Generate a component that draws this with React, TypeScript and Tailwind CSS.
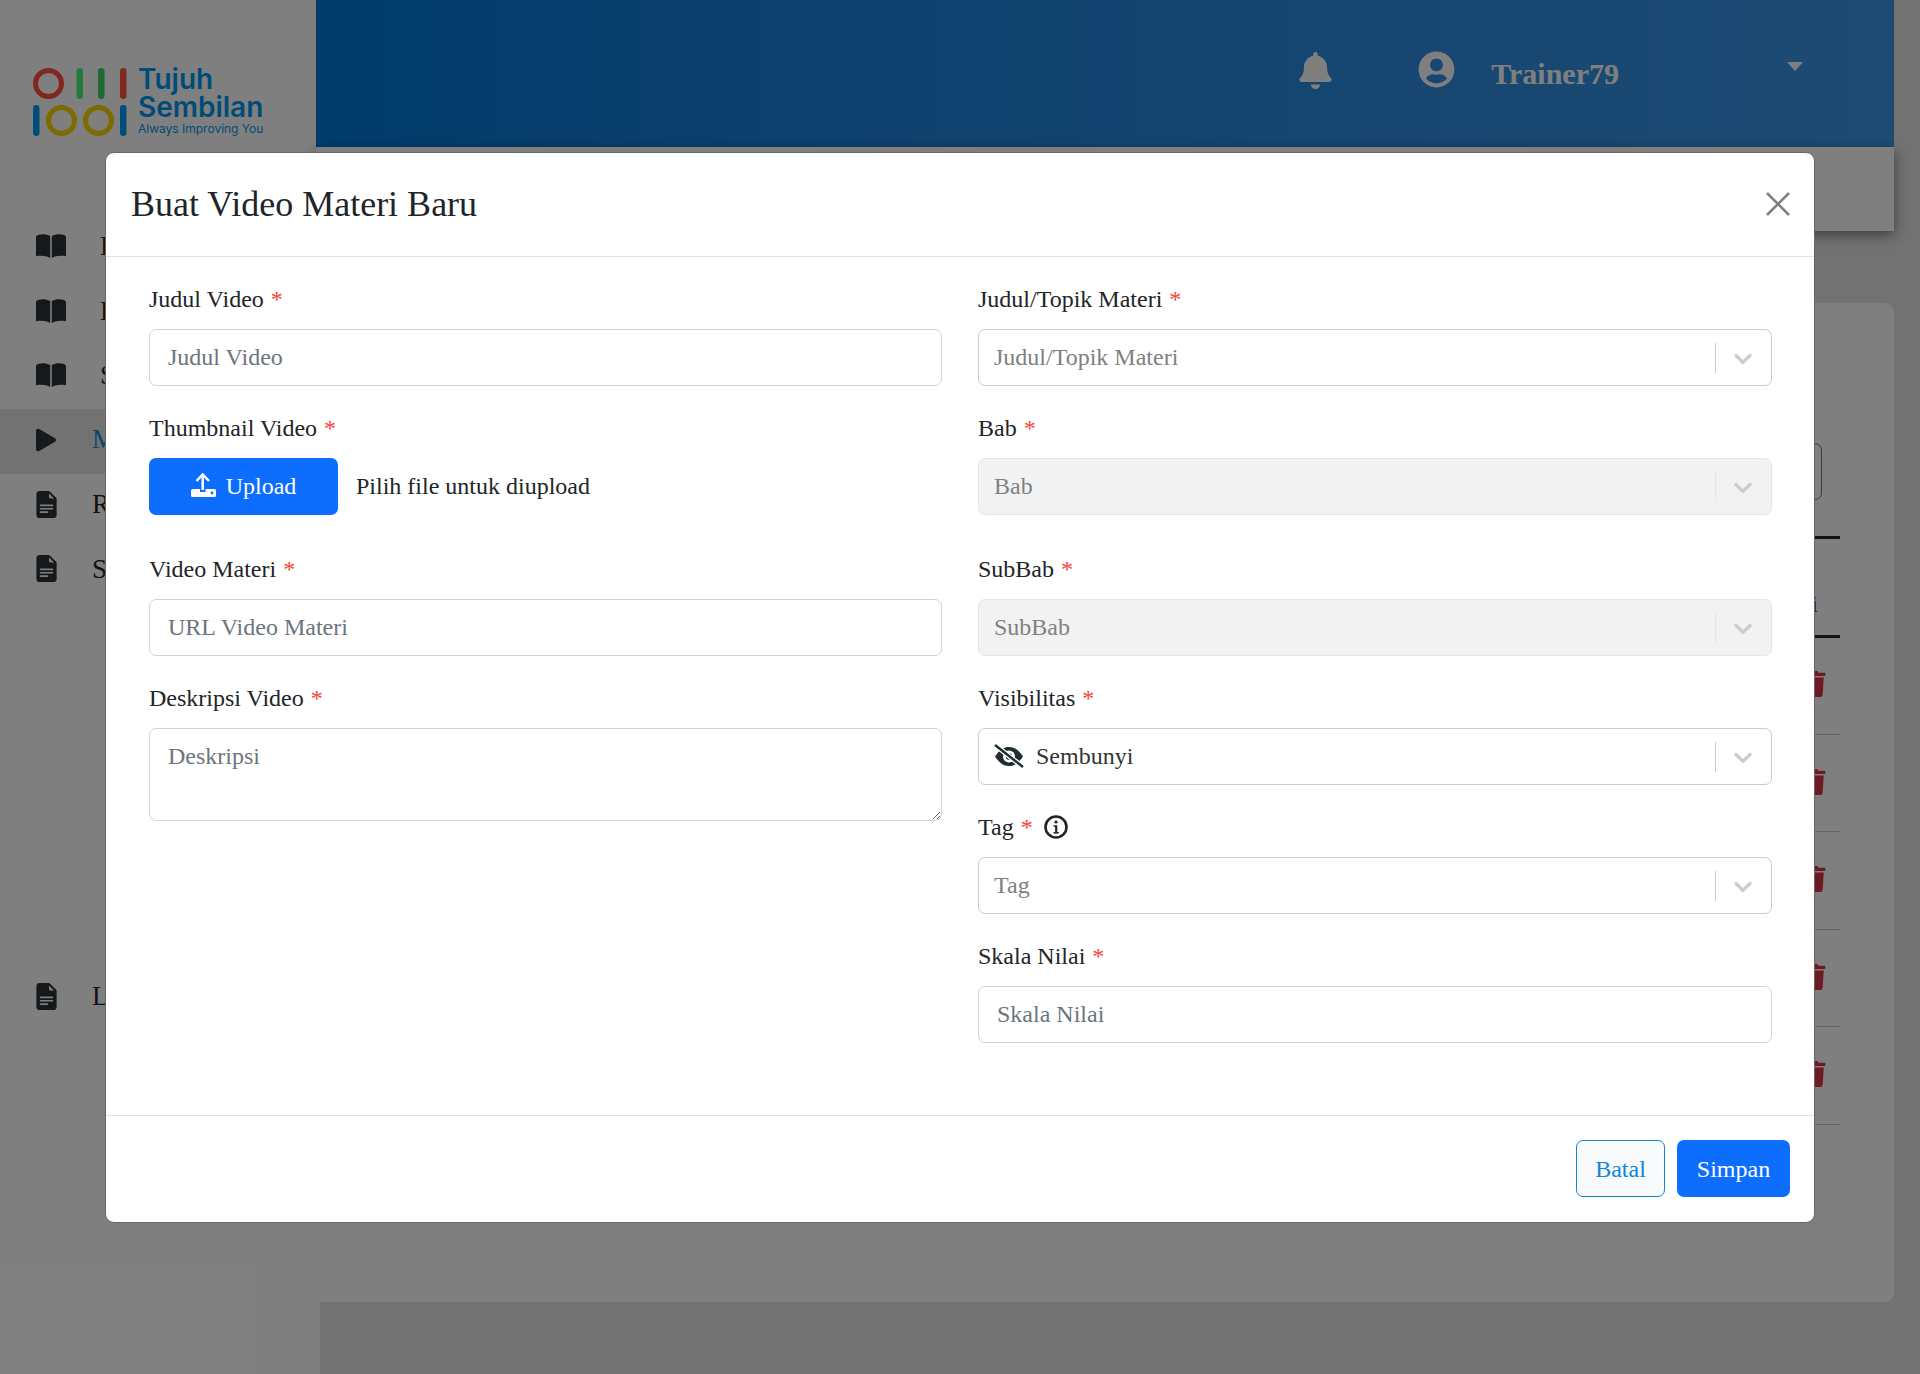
import React from "react";
import { BsFileEarmarkTextFill } from "react-icons/bs";
import { FaBell, FaUserCircle, FaTrash } from "react-icons/fa";

const Chevron = () => (
  <svg viewBox="0 0 20 20" width="30" height="30" fill="#cccccc">
    <path d="M4.516 7.548c0.436-0.446 1.043-0.481 1.576 0l3.908 3.747 3.908-3.747c0.533-0.481 1.141-0.446 1.574 0 0.436 0.445 0.408 1.197 0 1.615-0.406 0.418-4.695 4.502-4.695 4.502-0.217 0.223-0.502 0.335-0.787 0.335s-0.57-0.112-0.789-0.335c0 0-4.287-4.084-4.695-4.502s-0.436-1.17 0-1.615z" />
  </svg>
);

const Label = ({ text, children }: { text: string; children?: React.ReactNode }) => (
  <div className="flex items-center h-[36px] mb-[12px] text-[24px] leading-[36px] text-[#212529]">
    <span>{text}</span>
    <span className="ml-[7px] text-[#f44336]">*</span>
    {children}
  </div>
);

const TextField = ({ ph }: { ph: string }) => (
  <input
    placeholder={ph}
    className="block w-full h-[57px] px-[18px] rounded-[7px] border border-[#ced4da] bg-white text-[24px] outline-none placeholder:text-[#6c757d]"
  />
);

const Select = ({ children, disabled }: { children: React.ReactNode; disabled?: boolean }) => (
  <div
    className={
      disabled
        ? "flex items-center w-full h-[57px] rounded-[7px] border border-[#e6e6e6] bg-[#f2f2f2]"
        : "flex items-center w-full h-[57px] rounded-[7px] border border-[#cccccc] bg-white"
    }
  >
    <div className="flex flex-1 items-center pl-[15px] pb-[2px] text-[24px] text-[#808080]">{children}</div>
    <div className={disabled ? "w-px h-[30px] bg-[#e6e6e6]" : "w-px h-[30px] bg-[#cccccc]"} />
    <div className="flex items-center justify-center w-[55px] pr-[1px]">
      <Chevron />
    </div>
  </div>
);

const EyeOff = () => (
  <svg viewBox="0 0 30 24" width="30" height="24" className="mr-[12px] shrink-0">
    <path d="M1 12.5C6 5 10.500 3 15 3s9 2 14 9.500C24 20 19.500 22 15 22S6 20 1 12.500Z" fill="#1f2d33" />
    <circle cx="15" cy="12.500" r="6" fill="#ffffff" />
    <circle cx="15" cy="12.500" r="3.200" fill="#1f2d33" />
    <line x1="1" y1="1" x2="29" y2="23" stroke="#ffffff" strokeWidth="5" />
    <line x1="1" y1="1" x2="29" y2="23" stroke="#1f2d33" strokeWidth="2.400" />
  </svg>
);

const InfoIcon = () => (
  <svg viewBox="0 0 24 24" width="24" height="24" className="ml-[11px] shrink-0">
    <circle cx="12" cy="12" r="10.500" fill="none" stroke="#212529" strokeWidth="2.600" />
    <circle cx="12" cy="7" r="1.600" fill="#212529" />
    <path d="M9.500 10.300h3.800v6.700h1.500v1.500h-5.300v-1.500h1.600v-5.200h-1.600z" fill="#212529" />
  </svg>
);

const UploadIcon = () => (
  <svg viewBox="0 0 25 25" width="25" height="25" className="shrink-0">
    <rect x="0" y="16" width="25" height="8" rx="1.500" fill="#ffffff" />
    <rect x="9" y="13" width="5.500" height="6" fill="#0d6efd" />
    <line x1="11.700" y1="2" x2="11.700" y2="17" stroke="#ffffff" strokeWidth="2.500" />
    <polyline points="5.500,8 11.700,1.500 18,8" fill="none" stroke="#ffffff" strokeWidth="2.500" />
    <circle cx="21" cy="20" r="1.400" fill="#0d6efd" />
  </svg>
);

const PlayIcon = () => (
  <svg viewBox="0 0 16 16" width="40" height="40" fill="#2a3238" className="shrink-0 -ml-[10px]">
    <path d="m11.596 8.697-6.363 3.692c-.54.313-1.233-.066-1.233-.697V4.308c0-.63.692-1.01 1.233-.696l6.363 3.692a.802.802 0 0 1 0 1.393z" />
  </svg>
);

const NavItem = ({ icon, label, wide }: { icon: React.ReactNode; label: string; wide?: boolean }) => (
  <div className="flex items-center h-[64.500px] pl-[36px]">
    <div className={wide ? "flex items-center w-[64px] shrink-0" : "flex items-center w-[56px] shrink-0"}>{icon}</div>
    <span className="text-[27px] whitespace-nowrap text-[#212529]">{label}</span>
  </div>
);

const ActiveItem = ({ icon, label }: { icon: React.ReactNode; label: string }) => (
  <div className="flex items-center h-[65px] mt-[1px] -mb-[1.500px] pb-[3px] pl-[36px] bg-[#e4e4e4]">
    <div className="flex items-center w-[56px] shrink-0">{icon}</div>
    <span className="text-[27px] whitespace-nowrap text-[#0f8ee0]">{label}</span>
  </div>
);

const Book = () => (
  <svg viewBox="0 0 30 24" width="30" height="24" fill="#2a3238" className="shrink-0">
    <path d="M0 3.500C0 2 1 1.200 2.500 0.800 6.500 -0.300 10.500 0 14.200 2V24C10.500 21.800 5.500 21.300 0 22.300Z" />
    <path d="M30 3.500C30 2 29 1.200 27.500 0.800 23.500 -0.300 19.500 0 15.800 2V24C19.500 21.800 24.500 21.300 30 22.300Z" />
  </svg>
);
const FileIco = () => <BsFileEarmarkTextFill size={27} color="#2a3238" className="shrink-0 -ml-[3px]" />;

const Logo = () => (
  <div className="flex items-start pt-[68px] pl-[33px] h-[214px] shrink-0">
    <svg width="110" height="69" viewBox="0 0 110 69" className="shrink-0">
      <circle cx="15.500" cy="15.500" r="13" fill="none" stroke="#ff5040" strokeWidth="5" />
      <rect x="43.500" y="0" width="6.500" height="31" rx="3.250" fill="#46f474" />
      <rect x="65" y="0" width="6.500" height="31" rx="3.250" fill="#38d46a" />
      <rect x="87" y="0" width="6.500" height="31" rx="3.250" fill="#ff5040" />
      <rect x="0" y="37" width="6.500" height="31" rx="3.250" fill="#0098f0" />
      <circle cx="28.500" cy="52.500" r="13" fill="none" stroke="#ffd400" strokeWidth="5" />
      <circle cx="65.500" cy="52.500" r="13" fill="none" stroke="#ffd400" strokeWidth="5" />
      <rect x="87" y="37" width="6.500" height="31" rx="3.250" fill="#0098f0" />
    </svg>
    <div className="-ml-[5px] -mt-[3px] font-['Inter',sans-serif] text-[#0098f0] whitespace-nowrap">
      <div className="text-[28px] leading-[28px] font-semibold">Tujuh</div>
      <div className="text-[28px] leading-[28px] font-semibold">Sembilan</div>
      <div className="mt-[1px] text-[12px] leading-[14px]">Always Improving You</div>
    </div>
  </div>
);

const Row = ({ title }: { title: string }) => (
  <div className="flex items-center justify-between h-[97.500px] pb-[2px] border-b border-[#c8c8c8] pr-[13px] pl-[20px] text-[24px] text-[#212529]">
    <span>{title}</span>
    <FaTrash size={26} color="#dc3545" />
  </div>
);

export default function App() {
  return (
    <div className="relative flex w-full h-[1374px] overflow-hidden bg-[#e4e4e4] font-['Liberation_Serif',serif]">
      <aside className="flex flex-col w-[320px] shrink-0 bg-white">
        <Logo />
        <NavItem wide icon={<Book />} label="Bank Materi" />
        <NavItem wide icon={<Book />} label="Bab" />
        <NavItem wide icon={<Book />} label="SubBab" />
        <ActiveItem icon={<PlayIcon />} label="Materi Video" />
        <NavItem icon={<FileIco />} label="Rangkuman" />
        <NavItem icon={<FileIco />} label="Silabus" />
        <div className="mt-[363px]">
          <NavItem icon={<FileIco />} label="Laporan" />
        </div>
      </aside>

      <main className="flex flex-col flex-1 min-w-0 -ml-[4px] mr-[26px]">
        <header className="flex items-center justify-end shrink-0 h-[147px] pr-[91px] bg-gradient-to-r from-[#0078d8] to-[#3a96e8]">
          <FaBell size={37} color="#ffffff" className="mb-[6px]" />
          <FaUserCircle size={37} color="#ffffff" className="ml-[84px] mb-[8px]" />
          <span className="ml-[36px] text-[30px] leading-[36px] font-bold text-white">Trainer79</span>
          <div className="ml-[168px] mb-[15px] w-0 h-0 border-x-[8.500px] border-x-transparent border-t-[9px] border-t-white" />
        </header>
        <div className="h-[84px] shrink-0 bg-white shadow-[0_4px_12px_rgba(0,0,0,0.45)]" />
        <section className="mt-[72px] h-[999px] ml-[4px] rounded-r-[9px] bg-white pt-[140px] pr-[54px] pl-[30px]">
          <div className="flex justify-end pr-[18px]">
            <div className="w-[200px] h-[57px] rounded-[7px] border border-[#6c757d]" />
          </div>
          <div className="mt-[36px] mb-[-1px] border-t-[3px] border-b-[3px] border-[#212529] h-[102px] flex items-center justify-end pr-[22px] text-[24px] text-[#0d2a6b]">
            <span className="pt-[33px]">Aksi</span>
          </div>
          <Row title="Pengenalan" />
          <Row title="Pembahasan" />
          <Row title="Latihan" />
          <Row title="Kuis" />
          <Row title="Ringkasan" />
        </section>
      </main>

      <div className="absolute inset-0 bg-black/50">
        <div className="ml-[105px] mt-[152px] w-[1710px] h-[1071px] flex flex-col rounded-[9px] border border-[#666666] bg-white">
          <div className="flex items-center justify-between h-[104px] shrink-0 pl-[25px] pr-[24px] pb-[1px] border-b border-[#dee2e6]">
            <h5 className="text-[36px] leading-[54px] font-normal text-[#212529]">Buat Video Materi Baru</h5>
            <svg width="24" height="24" viewBox="0 0 24 24" stroke="#808080" strokeWidth="2.600" className="shrink-0">
              <line x1="1" y1="1" x2="23" y2="23" />
              <line x1="23" y1="1" x2="1" y2="23" />
            </svg>
          </div>

          <div className="grid flex-1 grid-cols-[793px_794px] gap-x-[36px] pt-[24px] pl-[43px] pr-[42px]">
            <div>
              <div className="mb-[24px]">
                <Label text="Judul Video" />
                <TextField ph="Judul Video" />
              </div>
              <div className="mb-[36px]">
                <Label text="Thumbnail Video" />
                <div className="flex items-center">
                  <div className="flex items-center justify-center gap-[10px] w-[189px] h-[57px] pb-[2px] rounded-[7px] bg-[#0d6efd] text-[24px] text-white">
                    <UploadIcon />
                    <span>Upload</span>
                  </div>
                  <span className="ml-[18px] pb-[2px] text-[24px] text-[#212529]">Pilih file untuk diupload</span>
                </div>
              </div>
              <div className="mb-[24px]">
                <Label text="Video Materi" />
                <TextField ph="URL Video Materi" />
              </div>
              <div>
                <Label text="Deskripsi Video" />
                <textarea
                  placeholder="Deskripsi"
                  className="block w-full h-[93px] px-[18px] py-[9px] rounded-[7px] border border-[#ced4da] bg-white text-[24px] leading-[36px] outline-none placeholder:text-[#6c757d]"
                />
              </div>
            </div>

            <div>
              <div className="mb-[24px]">
                <Label text="Judul/Topik Materi" />
                <Select>Judul/Topik Materi</Select>
              </div>
              <div className="mb-[36px]">
                <Label text="Bab" />
                <Select disabled>Bab</Select>
              </div>
              <div className="mb-[24px]">
                <Label text="SubBab" />
                <Select disabled>SubBab</Select>
              </div>
              <div className="mb-[24px]">
                <Label text="Visibilitas" />
                <Select>
                  <EyeOff />
                  <span className="text-[#333333]">Sembunyi</span>
                </Select>
              </div>
              <div className="mb-[24px]">
                <Label text="Tag">
                  <InfoIcon />
                </Label>
                <Select>Tag</Select>
              </div>
              <div>
                <Label text="Skala Nilai" />
                <TextField ph="Skala Nilai" />
              </div>
            </div>
          </div>

          <div className="flex justify-end gap-[12px] shrink-0 h-[107px] p-[24px] border-t border-[#dee2e6]">
            <div className="flex items-center justify-center w-[89px] h-[57px] rounded-[7px] border-[1.500px] border-[#0d86dc] bg-[#f8f9fa] text-[24px] text-[#0d86dc]">Batal</div>
            <div className="flex items-center justify-center w-[113px] h-[57px] rounded-[7px] bg-[#0d6efd] text-[24px] text-white">Simpan</div>
          </div>
        </div>
      </div>
    </div>
  );
}
